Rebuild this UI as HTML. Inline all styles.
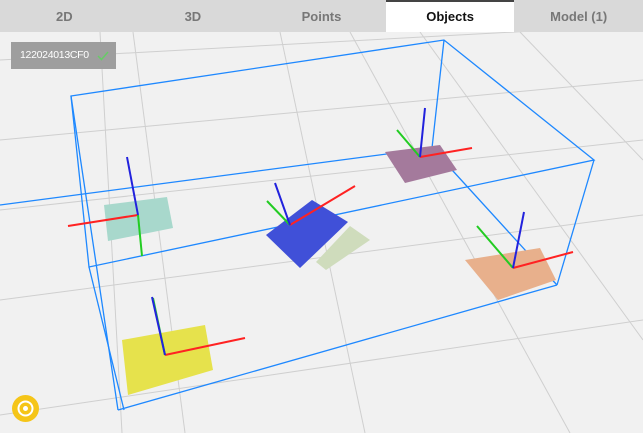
<!DOCTYPE html>
<html><head><meta charset="utf-8"><style>
body{margin:0;width:643px;height:433px;overflow:hidden;background:#f1f1f1;font-family:"Liberation Sans",sans-serif}
.tabs{position:absolute;left:0;top:0;width:643px;height:32px;background:#d9d9d9;display:flex}
.tab{width:128.6px;text-align:center;line-height:33px;font-size:13px;color:#777;font-weight:bold}
.tab.a{background:#fff;color:#111;border-top:2px solid #444;line-height:30px;box-sizing:border-box}
.lbl{position:absolute;left:11px;top:42px;width:105px;height:27px;background:#9e9e9e;color:#fff;font-size:10.5px;letter-spacing:-0.3px;line-height:27px;padding-left:9px;box-sizing:border-box;white-space:nowrap}
.btn{position:absolute;left:12px;top:395px;width:27px;height:27px;border-radius:50%;background:#f5c518}
svg{position:absolute;left:0;top:0}
</style></head><body>
<svg width="643" height="433">
<g stroke="#cfcfcf" stroke-width="1" fill="none">
<line x1="0" y1="60" x2="643" y2="25"/>
<line x1="0" y1="140" x2="643" y2="80"/>
<line x1="0" y1="210" x2="643" y2="140"/>
<line x1="0" y1="300" x2="643" y2="215"/>
<line x1="0" y1="415" x2="643" y2="320"/>
<line x1="133" y1="32" x2="185" y2="433"/>
<line x1="280" y1="32" x2="365" y2="433"/>
<line x1="350" y1="32" x2="570" y2="433"/>
<line x1="420" y1="32" x2="643" y2="340"/>
<line x1="520" y1="32" x2="643" y2="160"/>
<line x1="100" y1="32" x2="122" y2="433"/>
</g>
<g stroke="#1e88ff" stroke-width="1.3" fill="none">
<polygon points="71,96 444,40 594,160 89,267"/>
<line x1="71" y1="96" x2="118" y2="410"/>
<line x1="89" y1="267" x2="124" y2="410"/>
<line x1="444" y1="40" x2="432" y2="148"/>
<line x1="594" y1="160" x2="557" y2="285"/>
<line x1="432" y1="148" x2="557" y2="285"/>
<line x1="118" y1="410" x2="557" y2="285"/>
<line x1="0" y1="205" x2="432" y2="148"/>
</g>
<polygon points="104,205 167,197 173,228 108,241" fill="#a8d8cc"/>
<polygon points="385,152 440,145 457,170 405,183" fill="#a47a9c"/>
<polygon points="266,235 312,200 348,222 300,268" fill="#4050d8"/>
<polygon points="316,262 350,226 370,240 326,270" fill="#cfdcbc"/>
<polygon points="465,260 540,248 556,280 498,300" fill="#e8b08c"/>
<polygon points="122,340 205,325 213,370 128,395" fill="#e6e24c"/>
<g stroke-width="2" fill="none">
<line x1="138" y1="215" x2="68" y2="226" stroke="#f22"/><line x1="138" y1="215" x2="142" y2="256" stroke="#2c2"/><line x1="138" y1="215" x2="127" y2="157" stroke="#22d"/>
<line x1="290" y1="225" x2="355" y2="186" stroke="#f22"/><line x1="290" y1="225" x2="267" y2="201" stroke="#2c2"/><line x1="290" y1="225" x2="275" y2="183" stroke="#22d"/>
<line x1="420" y1="157" x2="472" y2="148" stroke="#f22"/><line x1="420" y1="157" x2="397" y2="130" stroke="#2c2"/><line x1="420" y1="157" x2="425" y2="108" stroke="#22d"/>
<line x1="513" y1="268" x2="573" y2="252" stroke="#f22"/><line x1="513" y1="268" x2="477" y2="226" stroke="#2c2"/><line x1="513" y1="268" x2="524" y2="212" stroke="#22d"/>
<line x1="165" y1="355" x2="245" y2="338" stroke="#f22"/><line x1="165" y1="355" x2="153" y2="298" stroke="#2c2"/><line x1="165" y1="355" x2="152" y2="297" stroke="#22d"/>
</g>
</svg>
<div class="tabs"><div class="tab">2D</div><div class="tab">3D</div><div class="tab">Points</div><div class="tab a">Objects</div><div class="tab">Model (1)</div></div>
<div class="lbl">122024013CF0<svg width="12" height="10" style="position:absolute;left:86px;top:9px"><path d="M1 5 L4.5 8.5 L11 1" fill="none" stroke="#6c6" stroke-width="1.5"/></svg></div>
<div class="btn"><svg width="27" height="27" style="position:static"><circle cx="13.5" cy="13.5" r="7" fill="none" stroke="#fff" stroke-width="2"/><circle cx="13.5" cy="13.5" r="2.5" fill="#fff"/></svg></div>
</body></html>
